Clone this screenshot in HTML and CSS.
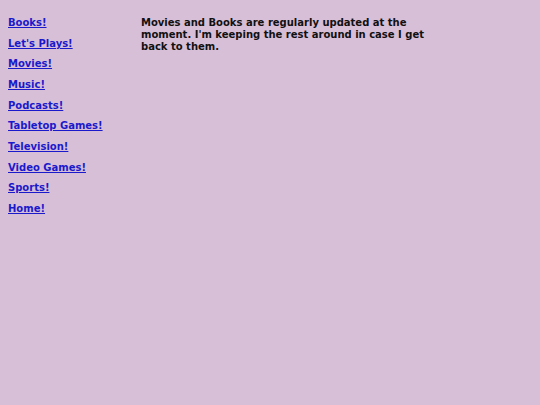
FILE: index.html
```html
<!DOCTYPE html>
<html>
<head>
<meta charset="utf-8">
<link rel="stylesheet" href="styles.css">
</head>
<body>
<div class="page">
  <nav class="nav">
    <a href="#">Books!</a>
    <a href="#">Let's Plays!</a>
    <a href="#">Movies!</a>
    <a href="#">Music!</a>
    <a href="#">Podcasts!</a>
    <a href="#">Tabletop Games!</a>
    <a href="#">Television!</a>
    <a href="#">Video Games!</a>
    <a href="#">Sports!</a>
    <a href="#">Home!</a>
  </nav>
  <main class="main">
    <p class="note">Movies and Books are regularly updated at the moment. I'm keeping the rest around in case I get back to them.</p>
  </main>
</div>
</body>
</html>
```
FILE: styles.css
```css
html, body {
  background: #d8bfd8;
}
body {
  margin: 0;
  padding: 17px 8px 8px 8px;
  font-family: "DejaVu Sans", Verdana, sans-serif;
  font-weight: bold;
  font-size: 10px;
  line-height: 12px;
  color: #111;
}
.page {
  display: flex;
  align-items: flex-start;
}
.nav {
  display: flex;
  flex-direction: column;
  align-items: flex-start;
  gap: 8.67px;
  width: 133px;
  flex: none;
}
.nav a {
  color: #1a1acc;
  text-decoration: underline;
}
.main {
  width: 300px;
}
.note {
  margin: 0;
}
```
